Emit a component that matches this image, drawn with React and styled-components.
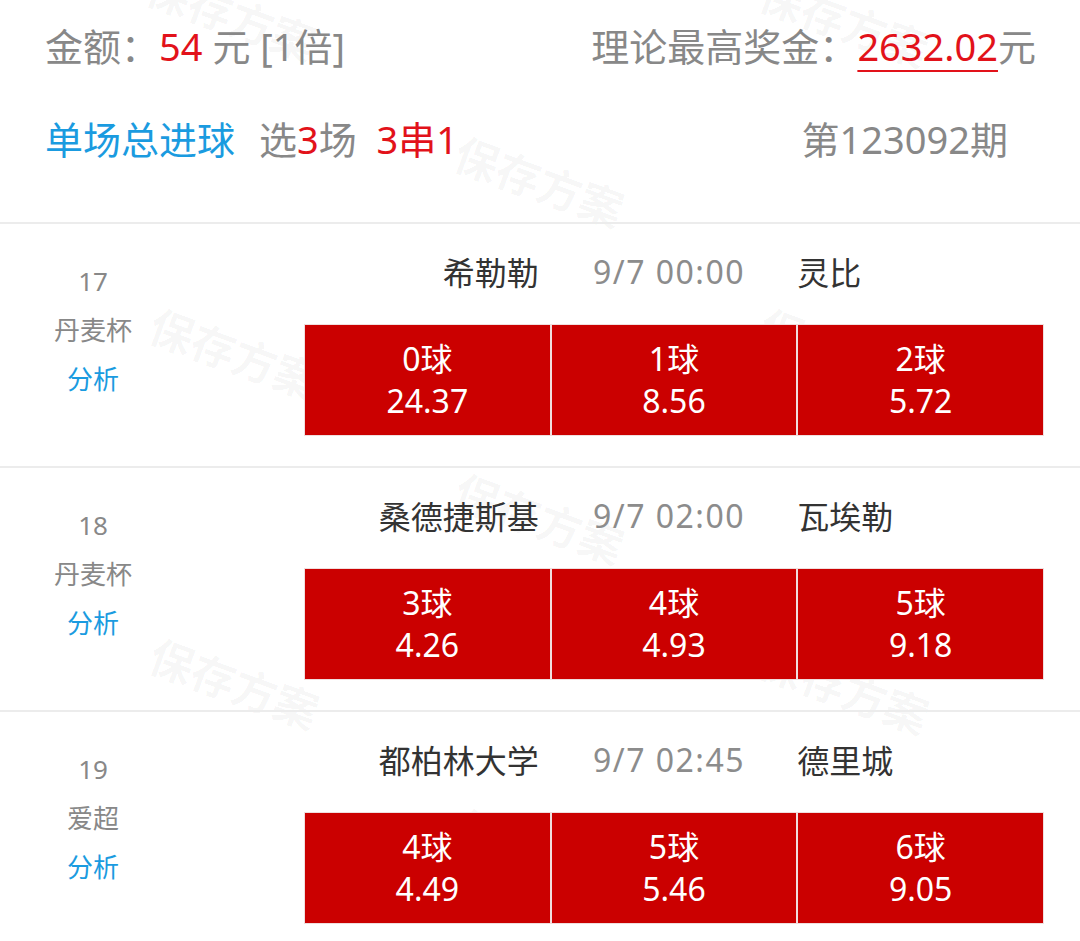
import styled, { createGlobalStyle } from "styled-components";

const GlobalStyle = createGlobalStyle`
  body {
    margin: 0;
    background: #fff;
    font-family: "Noto Sans", "Noto Sans CJK SC", sans-serif;
  }
`;

const Page = styled.div`
  position: relative;
  width: 1080px;
  min-height: 941px;
  overflow: hidden;
  background: #fff;
`;

const Watermark = styled.div`
  position: absolute;
  left: ${({ $x }) => $x - 92}px;
  top: ${({ $y }) => $y - 30}px;
  width: 184px;
  text-align: center;
  font-family: "Noto Sans CJK SC", sans-serif;
  font-size: 44px;
  font-weight: 700;
  color: rgba(0, 0, 0, 0.04);
  transform: rotate(20deg);
  white-space: nowrap;
  pointer-events: none;
  z-index: 0;
`;

const Content = styled.div`
  position: relative;
  z-index: 1;
`;

const Header = styled.div`
  padding: 16px 44px 0 45px;
  border-bottom: 2px solid #ececec;
  height: 224px;
  box-sizing: border-box;
`;

const HeaderRow = styled.div`
  display: flex;
  justify-content: space-between;
  align-items: center;
  height: 56px;
  font-size: 38px;
  color: #888;
  margin-bottom: ${({ $gap }) => $gap || 0}px;
`;

const Red = styled.span`
  color: #e2121a;
`;

const Prize = styled.span`
  color: #e2121a;
  text-decoration: underline;
  text-decoration-thickness: 2px;
  text-underline-offset: 9px;
`;

const Blue = styled.span`
  color: #1a9be0;
  margin-right: 24px;
`;

const Issue = styled.span`
  margin-right: 28px;
`;

const Match = styled.div`
  display: flex;
  height: 244px;
  box-sizing: border-box;
  border-bottom: 2px solid #ececec;
`;

const Side = styled.div`
  width: 186px;
  display: flex;
  flex-direction: column;
  align-items: center;
  padding-top: 33px;
  font-size: 26px;
  line-height: 49px;
  color: #888;
`;

const Analyze = styled.div`
  color: #1a9be0;
`;

const Main = styled.div`
  width: 740px;
  margin-left: 118px;
  padding-top: 24px;
`;

const Teams = styled.div`
  display: grid;
  grid-template-columns: repeat(3, 1fr);
  height: 46px;
  align-items: center;
  font-size: 32px;
  color: #333;
  margin-bottom: 30px;
`;

const Home = styled.div`
  text-align: right;
  padding-right: 12px;
`;

const Time = styled.div`
  text-align: center;
  color: #8c8c8c;
  font-size: 32px;
  letter-spacing: 1.5px;
  padding-right: 10px;
`;

const Away = styled.div`
  text-align: left;
`;

const Cells = styled.div`
  display: grid;
  grid-template-columns: repeat(3, 1fr);
`;

const Cell = styled.div`
  height: 112px;
  box-sizing: border-box;
  border: 1px solid #f0dede;
  background: #cb0000;
  color: #fff;
  display: flex;
  flex-direction: column;
  align-items: center;
  justify-content: center;
  font-size: 32px;
  line-height: 42px;
`;

const marks = [
  [232, 12], [845, 18], [540, 178], [235, 350], [845, 350],
  [540, 515], [235, 680], [845, 685], [540, 850],
];

const matches = [
  {
    no: "17", league: "丹麦杯", home: "希勒勒", time: "9/7 00:00", away: "灵比",
    odds: [["0球", "24.37"], ["1球", "8.56"], ["2球", "5.72"]],
  },
  {
    no: "18", league: "丹麦杯", home: "桑德捷斯基", time: "9/7 02:00", away: "瓦埃勒",
    odds: [["3球", "4.26"], ["4球", "4.93"], ["5球", "9.18"]],
  },
  {
    no: "19", league: "爱超", home: "都柏林大学", time: "9/7 02:45", away: "德里城",
    odds: [["4球", "4.49"], ["5球", "5.46"], ["6球", "9.05"]],
  },
];

export default function App() {
  return (
    <>
      <GlobalStyle />
      <Page>
        {marks.map(([x, y], i) => (
          <Watermark key={i} $x={x} $y={y}>保存方案</Watermark>
        ))}
        <Content>
          <Header>
            <HeaderRow $gap={37}>
              <span>
                金额：<Red>54</Red> 元 [1倍]
              </span>
              <span>
                理论最高奖金：<Prize>2632.02</Prize>元
              </span>
            </HeaderRow>
            <HeaderRow>
              <span>
                <Blue>单场总进球</Blue>选<Red>3</Red>场&nbsp;&nbsp;<Red>3串1</Red>
              </span>
              <Issue>第123092期</Issue>
            </HeaderRow>
          </Header>
          {matches.map((m) => (
            <Match key={m.no}>
              <Side>
                <div>{m.no}</div>
                <div>{m.league}</div>
                <Analyze>分析</Analyze>
              </Side>
              <Main>
                <Teams>
                  <Home>{m.home}</Home>
                  <Time>{m.time}</Time>
                  <Away>{m.away}</Away>
                </Teams>
                <Cells>
                  {m.odds.map(([goal, odd]) => (
                    <Cell key={goal}>
                      <div>{goal}</div>
                      <div>{odd}</div>
                    </Cell>
                  ))}
                </Cells>
              </Main>
            </Match>
          ))}
        </Content>
      </Page>
    </>
  );
}
